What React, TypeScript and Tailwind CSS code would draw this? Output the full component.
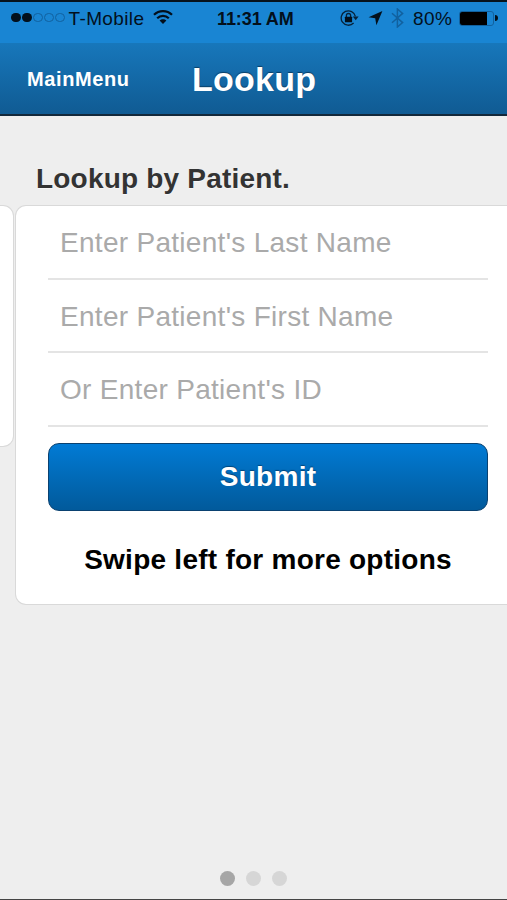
import React from 'react';

const fields = [
  "Enter Patient's Last Name",
  "Enter Patient's First Name",
  "Or Enter Patient's ID",
];

function WifiIcon() {
  return (
    <svg width="20" height="16" viewBox="0 0 20 16" fill="none" stroke="#03101c" strokeWidth="2.2">
      <path d="M1 5.8C6 .9 14 .9 19 5.8" />
      <path d="M4.2 9.2C7.4 6 12.6 6 15.8 9.2" />
      <path d="M10 15 6.6 11.6C8.5 9.8 11.5 9.8 13.4 11.6Z" fill="#03101c" stroke="none" />
    </svg>
  );
}

function RotationLockIcon() {
  return (
    <svg width="19" height="18" viewBox="0 0 19 18" fill="none" stroke="#06223a">
      <path d="M15.4 7.4A7.2 7.2 0 1 0 13.6 14" strokeWidth="1.3" />
      <path d="M12.8 7.6h5.8l-2.9 3.6Z" fill="#06223a" stroke="none" />
      <path d="M6.4 8.2V6.6a2.1 2.1 0 0 1 4.2 0v1.6" strokeWidth="1.3" />
      <rect x="4.9" y="7.8" width="7.2" height="5.4" rx=".5" fill="#03101c" stroke="none" />
    </svg>
  );
}

function LocationIcon() {
  return (
    <svg width="15" height="16" viewBox="0 0 15 16" fill="#03101c">
      <path d="M14.4 1 8.4 15.2 7.2 8.2.6 7.2Z" />
    </svg>
  );
}

function BluetoothIcon() {
  return (
    <svg width="13" height="20" viewBox="0 0 13 20" fill="none" stroke="#11619f" strokeWidth="1.5">
      <path d="M1 5.3 11.6 14.6 6.4 19V1L11.6 5.4 1 14.7" />
    </svg>
  );
}

function StatusBar() {
  return (
    <div className="flex h-[43px] items-start border-t-2 border-[#07131d] bg-[#1985d3] text-[19px] leading-[34px] text-[#03101c]">
      <div className="flex h-[34px] w-[217px] shrink-0 items-center pl-[11px]">
        <div className="-mt-[3px] flex gap-[1.5px]">
          <span className="size-[9.5px] rounded-full bg-[#03101c]" />
          <span className="size-[9.5px] rounded-full bg-[#03101c]" />
          <span className="size-[9.5px] rounded-full border border-[#11619f]" />
          <span className="size-[9.5px] rounded-full border border-[#11619f]" />
          <span className="size-[9.5px] rounded-full border border-[#11619f]" />
        </div>
        <span className="ml-[4px] w-[76px] whitespace-nowrap tracking-[0.38px]">T-Mobile</span>
        <span className="ml-[8px] -mt-[4px]">
          <WifiIcon />
        </span>
      </div>
      <span className="w-[123px] shrink-0 whitespace-nowrap text-[18px] font-bold tracking-[-0.1px]">
        11:31 AM
      </span>
      <div className="flex h-[34px] items-center whitespace-nowrap">
        <span className="-mt-[2px]">
          <RotationLockIcon />
        </span>
        <span className="ml-[9px] -mt-[2px]">
          <LocationIcon />
        </span>
        <span className="ml-[8px] -mt-[2px]">
          <BluetoothIcon />
        </span>
        <span className="ml-[9px] w-[41px] tracking-[0.4px]">80%</span>
        <div className="-mt-[2px] ml-[5px] flex h-[15px] w-[35px] rounded-[3px] border border-[#11619f]">
          <span className="h-full w-[27px] rounded-l-[2px] bg-black" />
        </div>
        <span className="-mt-[2px] ml-[1px] h-[6px] w-[2.5px] rounded-r-full bg-[#03101c]" />
      </div>
    </div>
  );
}

export default function App() {
  return (
    <div className="flex h-[900px] w-[507px] flex-col overflow-hidden border-b border-[#444444] bg-[#eeeeee] font-['Liberation_Sans',Arial,sans-serif]">
      <StatusBar />

      <header className="flex h-[73px] items-center border-b-2 border-[#12283a] bg-linear-to-b from-[#1777bb] to-[#105b93] pl-[27px] font-bold text-white">
        <button className="w-[165px] text-left text-[20px] tracking-[0.6px]">MainMenu</button>
        <h1 className="pt-[2px] text-[34px] tracking-[0.25px] [text-shadow:0_-1px_1px_#0b3f66]">Lookup</h1>
      </header>

      <h2 className="mt-[45px] h-[44px] whitespace-nowrap pl-[36px] text-[28px] leading-[36px] font-bold tracking-[0.2px] text-[#333333] [text-shadow:0_1px_0_#f7f7f7]">
        Lookup by Patient.
      </h2>

      {/* Swipeable panels, the previous one peeks in from the left */}
      <main className="flex items-start gap-px">
        <section className="h-[242px] w-[14px] shrink-0 rounded-r-[11px] border border-l-0 border-[#d9d9d9] bg-white" />
        <section className="h-[400px] w-[492px] shrink-0 rounded-l-[11px] border border-r-0 border-[#d9d9d9] bg-white pr-[19px] pl-[32px]">
          {fields.map((field) => (
            <div
              key={field}
              className="flex h-[73.7px] items-center border-b-2 border-[#e4e4e4] pt-[2px] pl-[12px] text-[28px] tracking-[0.29px] whitespace-nowrap text-[#aaaaaa]"
            >
              {field}
            </div>
          ))}
          <button className="mt-[16px] flex h-[68px] w-full items-center justify-center rounded-[11px] border border-[#0a4170] bg-linear-to-b from-[#017bd5] to-[#015a9b] text-[28px] font-bold tracking-[0.3px] text-white [text-shadow:0_-1px_1px_#01457a]">
            Submit
          </button>
          <p className="mt-[30px] text-center text-[28px] leading-[38px] font-bold tracking-[0.25px] whitespace-nowrap text-black">
            Swipe left for more options
          </p>
        </section>
      </main>

      <div className="mt-auto mb-[13px] flex justify-center gap-[11px]">
        <span className="size-[15px] rounded-full bg-[#a6a6a6]" />
        <span className="size-[15px] rounded-full bg-[#d6d6d6]" />
        <span className="size-[15px] rounded-full bg-[#d6d6d6]" />
      </div>
    </div>
  );
}
